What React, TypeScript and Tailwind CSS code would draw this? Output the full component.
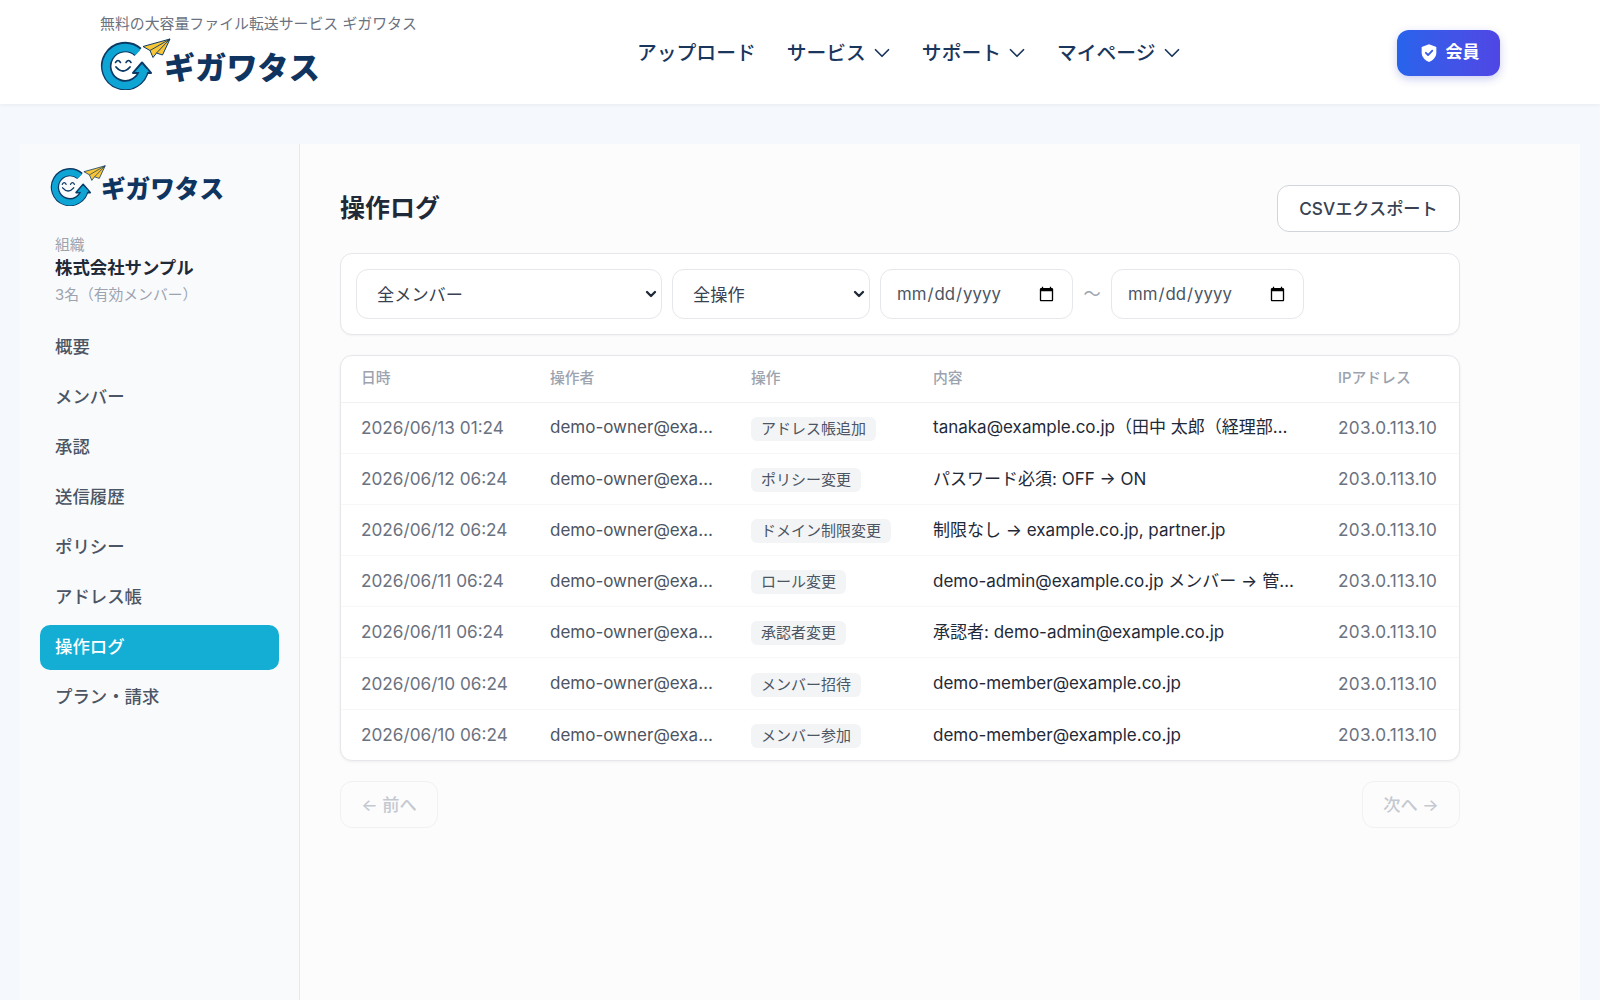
import { ChevronDown } from 'lucide-react'

const rows = [
	['2026/06/13 01:24', 'アドレス帳追加', 'tanaka@example.co.jp（田中 太郎（経理部…'],
	['2026/06/12 06:24', 'ポリシー変更', 'パスワード必須: OFF → ON'],
	['2026/06/12 06:24', 'ドメイン制限変更', '制限なし → example.co.jp, partner.jp'],
	['2026/06/11 06:24', 'ロール変更', 'demo-admin@example.co.jp メンバー → 管理者に変更'],
	['2026/06/11 06:24', '承認者変更', '承認者: demo-admin@example.co.jp'],
	['2026/06/10 06:24', 'メンバー招待', 'demo-member@example.co.jp'],
	['2026/06/10 06:24', 'メンバー参加', 'demo-member@example.co.jp']
]

const navItems = ['概要', 'メンバー', '承認', '送信履歴', 'ポリシー', 'アドレス帳', '操作ログ', 'プラン・請求']

function LogoMark({ className }: { className: string }) {
	return (
		<svg viewBox="0 0 71 52" className={className} fill="none">
			<path d="M38 14A19 19 0 1 0 44 31" stroke="#0b3a66" strokeWidth="10.5" />
			<path d="M33 35L42 24.5L51 35Z" fill="#0ea5d4" stroke="#0b3a66" strokeWidth="2" strokeLinejoin="round" />
			<path d="M38 14.5A19 19 0 1 0 44 31" stroke="#0ea5d4" strokeWidth="7.5" />
			<path d="M35 34L42 26.5L49 34Z" fill="#0ea5d4" />
			<path d="M15.5 24.5Q18 20.5 20.5 24.5M26 24.5Q28.5 20.5 31 24.5" stroke="#0b3a66" strokeWidth="1.6" strokeLinecap="round" />
			<path d="M16 29Q23 37 30 29" stroke="#0b3a66" strokeWidth="1.8" strokeLinecap="round" />
			<path d="M70 1L43 8.5L50 12.5L53 19.5L56.5 15L62.5 17Z" fill="#f8c537" stroke="#0b3a66" strokeWidth="1" strokeLinejoin="round" />
			<path d="M70 1L50 12.5M70 1L56.5 15" stroke="#0b3a66" strokeWidth="0.9" />
		</svg>
	)
}

function HeaderNavItem({ label }: { label: string }) {
	return (
		<div className="flex items-center gap-[3px]">
			<span className="pt-[2px]">{label}</span>
			<ChevronDown className="w-[26px] h-[26px]" strokeWidth={1.6} />
		</div>
	)
}

function FilterSelect({ label, className }: { label: string; className: string }) {
	return (
		<div className={className}>
			<select className="appearance-none w-full h-full pt-[1px] bg-white rounded-[12px] border border-[#e5e7eb] pl-[20px] pr-[8px] text-[#374151]">
				<option>{label}</option>
			</select>
			<ChevronDown className="absolute right-[3px] top-[17px] w-[16px] h-[16px] text-[#1f2937] pointer-events-none" strokeWidth={3.5} />
		</div>
	)
}

export default function App() {
	return (
		<div
			className="min-h-screen h-[1000px] overflow-hidden flex flex-col bg-[#f5f8fc] text-[#1f2937]"
			style={{ fontFamily: 'Inter, "Noto Sans CJK JP", sans-serif' }}
		>
			<header className="h-[104px] shrink-0 bg-white shadow-[0_1px_4px_rgba(15,40,80,0.06)] flex items-center pl-[100px] pr-[100px]">
				<div className="w-[537px] shrink-0 -mt-[1px]">
					<div className="text-[14.9px] leading-[20px] text-[#6b7280]">無料の大容量ファイル転送サービス ギガワタス</div>
					<div className="flex items-end mt-[4px]">
						<LogoMark className="w-[71px] h-[52px] shrink-0" />
						<span className="text-[31px] leading-[40px] font-black text-[#0f3460] -ml-[7px] mb-[2px] tracking-[0.2px]">ギガワタス</span>
					</div>
				</div>
				<nav className="flex items-center gap-[27px] text-[19.8px] font-medium text-[#1a365d] mt-[2px]">
					<span className="mr-[4px] pt-[2px]">アップロード</span>
					<HeaderNavItem label="サービス" />
					<HeaderNavItem label="サポート" />
					<HeaderNavItem label="マイページ" />
				</nav>
				<button className="ml-auto mt-[1px] w-[103px] h-[46px] rounded-[12px] bg-gradient-to-r from-[#2563eb] to-[#4f46e5] shadow-[0_3px_8px_rgba(50,60,200,0.25)] text-white text-[17px] font-bold flex items-center justify-center gap-[6px]">
					<svg viewBox="0 0 24 24" className="w-[22px] h-[22px]">
						<path d="M12 2.5L20 5.5V11.5C20 16.5 16.5 20 12 21.8C7.5 20 4 16.5 4 11.5V5.5Z" fill="#ffffff" />
						<path d="M8.6 11.8L11 14.2L15.6 9.4" fill="none" stroke="#3b5be8" strokeWidth="2" strokeLinecap="round" strokeLinejoin="round" />
					</svg>
					会員
				</button>
			</header>

			<div className="flex-1 flex mt-[40px] mx-[20px] min-h-0">
				<aside className="w-[280px] shrink-0 bg-[#f9fafc] border-r border-[#e5e7eb] px-[20px] pt-[21px]">
					<div className="flex items-end pl-[10px]">
						<LogoMark className="w-[56px] h-[41px] shrink-0" />
						<span className="text-[24.6px] leading-[34px] font-black text-[#0f3460] -ml-[5px]">ギガワタス</span>
					</div>
					<div className="pl-[15px] mt-[29px]">
						<div className="text-[14.8px] leading-[20px] text-[#9ca3af]">組織</div>
						<div className="text-[17.4px] leading-[26px] font-bold text-[#1f2937]">株式会社サンプル</div>
						<div className="text-[14.8px] leading-[20px] text-[#9ca3af] mt-[4px]">3名（有効メンバー）</div>
					</div>
					<nav className="flex flex-col gap-[5px] mt-[20px]">
						{navItems.map((item) => (
							<div
								key={item}
								className={
									item === '操作ログ'
										? 'h-[45px] rounded-[10px] flex items-center px-[15px] text-[17.4px] font-medium bg-[#14aed5] text-white'
										: 'h-[45px] rounded-[10px] flex items-center px-[15px] text-[17.4px] font-medium text-[#4b5563]'
								}
							>
								{item}
							</div>
						))}
					</nav>
				</aside>

				<main className="flex-1 bg-[#fcfcfd] pl-[40px] pt-[41px]">
					<div className="w-[1120px]">
						<div className="flex items-center justify-between h-[47px]">
							<h1 className="text-[25px] font-bold text-[#1f2937]">操作ログ</h1>
							<button className="w-[183px] h-[47px] pt-[1px] rounded-[12px] bg-white border border-[#d1d5db] text-[17.2px] font-medium text-[#374151]">
								CSVエクスポート
							</button>
						</div>

						<div className="mt-[21px] h-[82px] bg-white rounded-[12px] border border-[#e5e7eb] shadow-[0_1px_2px_rgba(0,0,0,0.04)] flex items-center pl-[15px] text-[17.2px]">
							<FilterSelect label="全メンバー" className="relative w-[306px] h-[50px]" />
							<FilterSelect label="全操作" className="relative ml-[10px] w-[198px] h-[50px]" />
							<input type="date" className="ml-[10px] w-[193px] h-[50px] pt-[1px] bg-white rounded-[12px] border border-[#e5e7eb] px-[15px] text-[16.8px] text-[#4b5563]" />
							<span className="w-[38px] text-center text-[#9ca3af]">〜</span>
							<input type="date" className="w-[193px] h-[50px] pt-[1px] bg-white rounded-[12px] border border-[#e5e7eb] px-[15px] text-[16.8px] text-[#4b5563]" />
						</div>

						<div className="mt-[20px] bg-white rounded-[12px] border border-[#e5e7eb] shadow-[0_1px_3px_rgba(0,0,0,0.06)] overflow-hidden">
							<table className="w-[1118px] table-fixed border-collapse">
								<colgroup>
									<col className="w-[189px]" />
									<col className="w-[201px]" />
									<col className="w-[182px]" />
									<col className="w-[405px]" />
									<col className="w-[141px]" />
								</colgroup>
								<thead>
									<tr className="h-[46px] text-left text-[14.8px] text-[#9ca3af] border-b border-[#f0f1f3]">
										<th className="pl-[20px] pb-[1px] font-medium">日時</th>
										<th className="pl-[20px] pb-[1px] font-medium">操作者</th>
										<th className="pl-[20px] pb-[1px] font-medium">操作</th>
										<th className="pl-[20px] pb-[1px] font-medium">内容</th>
										<th className="pl-[20px] pb-[1px] font-medium">IPアドレス</th>
									</tr>
								</thead>
								<tbody className="text-[17.2px]">
									{rows.map((row, i) => (
										<tr key={i} className="h-[51.2px] border-b border-[#f6f7f8] last:border-b-0">
											<td className="pl-[20px] text-[#6b7280]">{row[0]}</td>
											<td className="pl-[20px] pr-[18px] pt-[1px] text-[17px] text-[#4b5563] truncate">demo-owner@example.co.jp</td>
											<td className="pl-[20px]">
												<span className="inline-block rounded-[6px] bg-[#f3f4f6] px-[10px] h-[24px] leading-[24px] text-[15px] text-[#4b5563] whitespace-nowrap">
													{row[1]}
												</span>
											</td>
											<td className="px-[20px] pt-[1px] text-[17px] text-[#1f2937] truncate">{row[2]}</td>
											<td className="pl-[20px] text-[#6b7280] tracking-[0.3px]">203.0.113.10</td>
										</tr>
									))}
								</tbody>
							</table>
						</div>

						<div className="mt-[20px] flex justify-between">
							<button className="w-[98px] h-[47px] rounded-[12px] border border-[#f0f1f3] text-[17.2px] font-medium text-[#c4c8cf]">← 前へ</button>
							<button className="w-[98px] h-[47px] rounded-[12px] border border-[#f0f1f3] text-[17.2px] font-medium text-[#c4c8cf]">次へ →</button>
						</div>
					</div>
				</main>
			</div>
		</div>
	)
}
